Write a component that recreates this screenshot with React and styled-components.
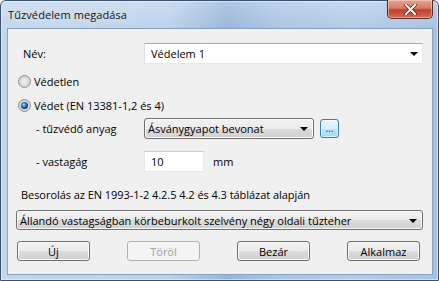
import React from 'react';
import styled, { createGlobalStyle } from 'styled-components';

const GlobalStyle = createGlobalStyle`
  html, body {
    margin: 0;
    padding: 0;
  }
  body {
    width: 439px;
    height: 281px;
    overflow: hidden;
    background: #ffffff;
    font-family: "Open Sans", "Liberation Sans", sans-serif;
  }
`;

const Window = styled.div`
  box-sizing: border-box;
  width: 439px;
  height: 281px;
  display: flex;
  flex-direction: column;
  padding: 0 5px 5px 6px;
  border: 1px solid #3b5171;
  border-radius: 6px 6px 0 0;
  background:
    linear-gradient(180deg, rgba(255, 255, 255, 0.25) 0px, rgba(255, 255, 255, 0) 30px),
    linear-gradient(90deg, #c2d6ec 0%, #bcd2ea 38%, #97b5da 52%, #a9c3e3 62%, #b4cbe7 80%, #a7c1e2 100%);
  box-shadow: inset 0 0 0 1px rgba(255, 255, 255, 0.45);
`;

const TitleBar = styled.div`
  height: 27px;
  display: flex;
  align-items: flex-start;
`;

const Title = styled.div`
  padding: 6px 0 0 1px;
  font-size: 11px;
  letter-spacing: 0.1px;
  color: #111;
  text-shadow: 0 0 8px rgba(255, 255, 255, 0.9);
`;

const CloseButton = styled.div`
  margin: -1px 0 0 auto;
  width: 46px;
  height: 19px;
  box-sizing: border-box;
  display: flex;
  align-items: center;
  justify-content: center;
  border: 1px solid #5a2a26;
  border-top: none;
  border-radius: 0 0 5px 5px;
  background: linear-gradient(180deg, #e8a493 0%, #d47b68 45%, #c0422f 55%, #cf6b55 100%);
  box-shadow: inset 0 0 0 1px rgba(255, 220, 210, 0.5);
`;

const Client = styled.div`
  flex: 1;
  box-sizing: border-box;
  background: #f0f0f0;
  border: 1px solid #8aa1bd;
  padding: 14px 9px 0 8px;
  display: flex;
  flex-direction: column;
  font-size: 11px;
  color: #000;
`;

const Row = styled.div`
  display: flex;
  align-items: center;
  height: ${p => p.h || 21}px;
  margin-top: ${p => p.mt || 0}px;
`;

const Label = styled.div`
  width: ${p => p.w || 128}px;
  box-sizing: border-box;
  padding-left: ${p => p.indent || 7}px;
  flex-shrink: 0;
`;

const EditCombo = styled.div`
  flex: 1;
  height: 21px;
  box-sizing: border-box;
  display: flex;
  align-items: center;
  padding: 0 4px 0 6px;
  background: #fff;
  border: 1px solid #e3e9ef;
  border-top-color: #abadb3;
  border-left-color: #dbdfe6;
`;

const ListCombo = styled.div`
  ${p => (p.w ? `width: ${p.w}px;` : 'flex: 1;')}
  height: ${p => p.h || 21}px;
  box-sizing: border-box;
  display: flex;
  align-items: center;
  padding: 0 5px 0 3px;
  border: 1px solid #707070;
  border-radius: 3px;
  background: linear-gradient(180deg, #f2f2f2 0%, #ebebeb 50%, #dddddd 51%, #cfcfcf 100%);
  box-shadow: inset 0 0 0 1px #fbfbfb;
`;

const ComboText = styled.span`
  flex: 1;
  white-space: nowrap;
  overflow: hidden;
`;

const Arrow = styled.span`
  width: 0;
  height: 0;
  border-left: 4px solid transparent;
  border-right: 4px solid transparent;
  border-top: 4px solid #000;
  margin-top: 1px;
`;

const MoreButton = styled.div`
  width: 19px;
  height: 19px;
  margin-left: 6px;
  box-sizing: border-box;
  display: flex;
  align-items: flex-end;
  justify-content: center;
  font-size: 10px;
  line-height: 1;
  padding-bottom: 4px;
  color: #1e3954;
  border: 1px solid #3c7fb1;
  border-radius: 3px;
  background: linear-gradient(180deg, #eaf6fd 0%, #d9f0fc 50%, #bee6fd 51%, #a7d9f5 100%);
  box-shadow: inset 0 0 0 1px rgba(255, 255, 255, 0.6);
`;

const RadioRow = styled.div`
  display: flex;
  align-items: center;
  height: 16px;
  margin-top: ${p => p.mt || 0}px;
  padding-left: 2px;
  gap: 3px;
`;

const RadioCircle = styled.span`
  width: 13px;
  height: 13px;
  box-sizing: border-box;
  border-radius: 50%;
  border: 1px solid #8f8f8f;
  background: radial-gradient(circle at 50% 50%, #f4f4f4 0, #e2e2e2 3px, #d2d2d2 5px, #eeeeee 6px);
  display: flex;
  align-items: center;
  justify-content: center;

  &::after {
    content: '';
    display: ${p => (p.checked ? 'block' : 'none')};
    width: 7px;
    height: 7px;
    border-radius: 50%;
    background: radial-gradient(circle at 40% 40%, #c8e6fb 0, #4f92cf 1.5px, #1b5a9a 3px, #0d3f73 3.5px);
  }
`;

const Input = styled.div`
  width: 60px;
  height: 21px;
  box-sizing: border-box;
  display: flex;
  align-items: center;
  padding-left: 6px;
  background: #fff;
  border: 1px solid #e3e9ef;
  border-top-color: #c8ccd4;
`;

const Unit = styled.span`
  margin-left: 9px;
`;

const Note = styled.div`
  height: 16px;
  margin-top: 14px;
  padding-left: 5px;
  display: flex;
  align-items: center;
  white-space: nowrap;
  letter-spacing: -0.05px;
`;

const ButtonRow = styled.div`
  display: flex;
  justify-content: space-between;
  margin-top: 11px;
  padding: 0 3px 0 1px;
`;

const Button = styled.div`
  width: 73px;
  height: 20px;
  box-sizing: border-box;
  display: flex;
  align-items: center;
  justify-content: center;
  border-radius: 3px;
  border: 1px solid ${p => (p.disabled ? '#adb2b5' : '#707070')};
  color: ${p => (p.disabled ? '#a0a0a0' : '#000')};
  background: ${p =>
    p.disabled
      ? '#f4f4f4'
      : 'linear-gradient(180deg, #f2f2f2 0%, #ebebeb 50%, #dddddd 51%, #cfcfcf 100%)'};
  box-shadow: inset 0 0 0 1px ${p => (p.disabled ? '#f4f4f4' : '#fbfbfb')};
`;

export default function App() {
  return (
    <>
      <GlobalStyle />
      <Window>
        <TitleBar>
          <Title>Tűzvédelem megadása</Title>
          <CloseButton>
            <svg width="13" height="11" viewBox="0 0 13 11">
              <path d="M2 1 L11 10 M11 1 L2 10" stroke="#5a1d16" strokeWidth="3.4" strokeLinecap="round" />
              <path d="M2 1 L11 10 M11 1 L2 10" stroke="#ffffff" strokeWidth="2" strokeLinecap="round" />
            </svg>
          </CloseButton>
        </TitleBar>
        <Client>
          <Row>
            <Label>Név:</Label>
            <EditCombo>
              <ComboText>Védelem 1</ComboText>
              <Arrow />
            </EditCombo>
          </Row>

          <RadioRow mt={9}>
            <RadioCircle />
            <span>Védetlen</span>
          </RadioRow>
          <RadioRow mt={8}>
            <RadioCircle checked />
            <span>Védet (EN 13381-1,2 és 4)</span>
          </RadioRow>

          <Row mt={5}>
            <Label indent={20}>- tűzvédő anyag</Label>
            <ListCombo w={170}>
              <ComboText>Ásványgyapot bevonat</ComboText>
              <Arrow />
            </ListCombo>
            <MoreButton>...</MoreButton>
          </Row>

          <Row mt={12}>
            <Label indent={20}>- vastagág</Label>
            <Input>10</Input>
            <Unit>mm</Unit>
          </Row>

          <Note>Besorolás az EN 1993-1-2 4.2.5 4.2 és 4.3 táblázat alapján</Note>

          <Row mt={8} h={20}>
            <ListCombo h={20}>
              <ComboText>Állandó vastagságban körbeburkolt szelvény négy oldali tűzteher</ComboText>
              <Arrow />
            </ListCombo>
          </Row>

          <ButtonRow>
            <Button>Új</Button>
            <Button disabled>Töröl</Button>
            <Button>Bezár</Button>
            <Button>Alkalmaz</Button>
          </ButtonRow>
        </Client>
      </Window>
    </>
  );
}
